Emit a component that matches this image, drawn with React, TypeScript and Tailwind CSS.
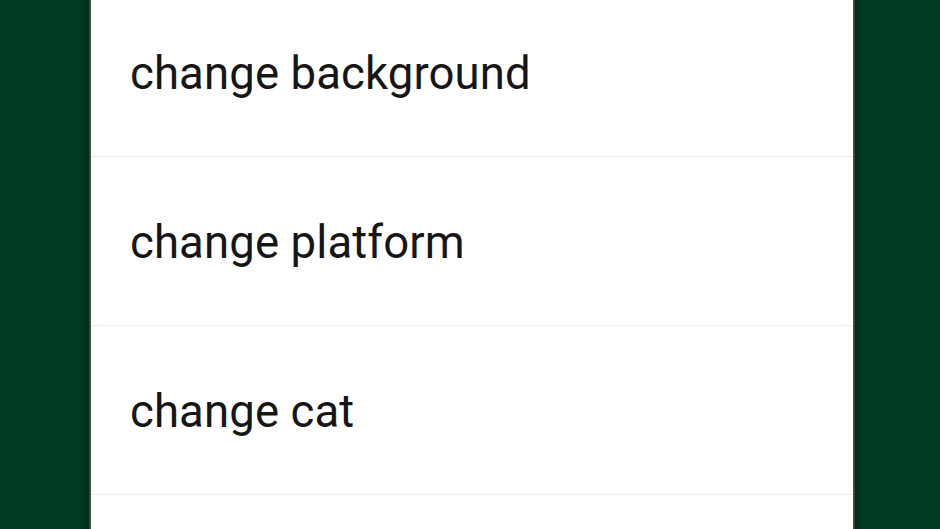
const items = ['change background', 'change platform', 'change cat', ''];

export default function App() {
    return (
        <div className="h-[529px] w-[940px] overflow-hidden bg-[#013a22]">
            <div className="ml-[91px] w-[762px] h-[560px] -mt-[12px] bg-white shadow-[0_0_2px_1px_rgba(120,120,120,0.9),0_0_8px_3px_rgba(0,0,0,0.45)]">
                {items.map((label, i) => (
                    <div
                        key={i}
                        className="h-[169px] flex items-center pl-[39px] pt-[4px] border-b border-[#ededed] text-[45.5px] tracking-[0.12px] text-[#161616] font-['Roboto',sans-serif]"
                    >
                        {label}
                    </div>
                ))}
            </div>
        </div>
    );
}
